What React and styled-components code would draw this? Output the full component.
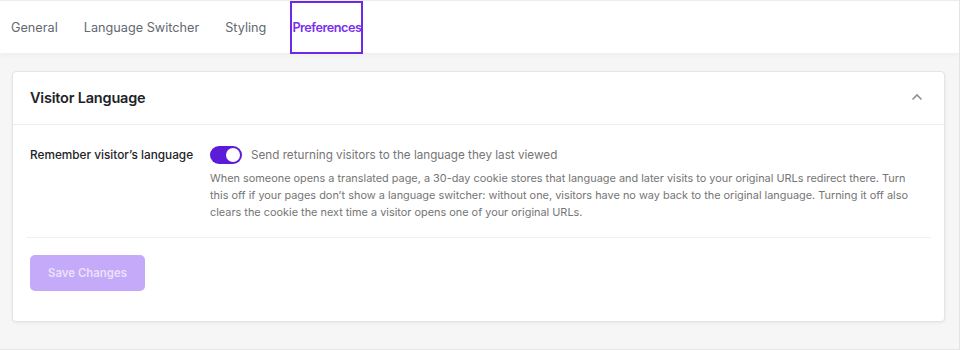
import { createGlobalStyle, styled } from "styled-components";

const Global = createGlobalStyle`
  html, body {
    margin: 0;
    padding: 0;
    background: #f6f6f7;
  }
  body {
    font-family: Inter, "Noto Sans", "Liberation Sans", sans-serif;
    -webkit-font-smoothing: antialiased;
  }
`

const Frame = styled.div`
  box-sizing: border-box;
  width: 960px;
  height: 350px;
  background: #f6f6f7;
  border-right: 1px solid #e4e4e6;
  border-bottom: 1px solid #e4e4e6;
  overflow: hidden;
`
const Nav = styled.div`
  box-sizing: border-box;
  height: 53px;
  background: #ffffff;
  border-top: 1px solid #ececec;
  display: flex;
  align-items: stretch;
  gap: 22px;
  padding-left: 9px;
  box-shadow: 0 2px 6px rgba(0, 0, 0, 0.04);
`
const Tab = styled.div`
  box-sizing: border-box;
  display: flex;
  align-items: center;
  font-size: 12.7px;
  font-weight: ${props => props.active ? 600 : 400};
  letter-spacing: ${props => props.active ? '-0.5px' : '0'};
  color: ${props => props.active ? '#7a2ff0' : '#646970'};
  border: ${props => props.active ? '2px solid #6a2be6' : '2px solid transparent'};
  margin-bottom: -1px;
  padding: 0;
`
const Content = styled.div`
  padding: 18px 14px 0 12px;
`
const Card = styled.div`
  box-sizing: border-box;
  height: 251px;
  background: #ffffff;
  border: 1px solid #e3e4e7;
  border-radius: 4px;
  box-shadow: 0 1px 3px rgba(0, 0, 0, 0.06);
`
const CardHeader = styled.div`
  box-sizing: border-box;
  height: 53px;
  padding: 0 21px 2px 17px;
  border-bottom: 1px solid #ececee;
  display: flex;
  align-items: center;
  justify-content: space-between;
`
const Title = styled.div`
  font-size: 14.5px;
  font-weight: 600;
  color: #1d2327;
  letter-spacing: -0.2px;
`
const CardBody = styled.div`
  padding: 0 13px;
`
const Row = styled.div`
  display: grid;
  grid-template-columns: 180px 1fr;
  padding: 21px 4px 16px;
  border-bottom: 1px solid #f0f0f1;
`
const Label = styled.div`
  font-size: 11.8px;
  font-weight: 500;
  color: #1d2327;
  line-height: 18px;
`
const ToggleLine = styled.div`
  display: flex;
  align-items: center;
  gap: 9px;
  height: 18px;
`
const Toggle = styled.div`
  position: relative;
  width: 32px;
  height: 18px;
  border-radius: 9px;
  background: ${props => props.on ? '#5b1bd8' : '#c3c4c7'};
  flex-shrink: 0;
  &::after {
    content: "";
    position: absolute;
    top: 2px;
    left: ${props => props.on ? '16px' : '2px'};
    width: 14px;
    height: 14px;
    border-radius: 50%;
    background: #ffffff;
  }
`
const ToggleText = styled.div`
  font-size: 11.7px;
  color: #757575;
`
const Desc = styled.div`
  margin-top: 6px;
  max-width: 706px;
  font-size: 10.9px;
  line-height: 17px;
  color: #757575;
`
const Footer = styled.div`
  padding: 17px 4px;
`
const SaveButton = styled.button`
  box-sizing: border-box;
  width: 115px;
  height: 36px;
  border: none;
  border-radius: 5px;
  background: #c4aaf8;
  color: #ebe1fd;
  font-family: inherit;
  font-size: 11.4px;
  font-weight: 600;
  cursor: not-allowed;
`

function Chevron() {
    return (
        <svg width="12" height="8" viewBox="0 0 12 8">
            <polyline points="1.5,6.5 6,2 10.5,6.5" fill="none" stroke="#8c8f94" strokeWidth="1.6" />
        </svg>
    )
}

function App() {
    const tabs = ["General", "Language Switcher", "Styling", "Preferences"];
    return (
        <Frame>
            <Global />
            <Nav>
                {tabs.map(t => (
                    <Tab key={t} active={t === "Preferences"}>{t}</Tab>
                ))}
            </Nav>
            <Content>
                <Card>
                    <CardHeader>
                        <Title>Visitor Language</Title>
                        <Chevron />
                    </CardHeader>
                    <CardBody>
                        <Row>
                            <Label>Remember visitor’s language</Label>
                            <div>
                                <ToggleLine>
                                    <Toggle on />
                                    <ToggleText>Send returning visitors to the language they last viewed</ToggleText>
                                </ToggleLine>
                                <Desc>
                                    When someone opens a translated page, a 30-day cookie stores that language and later visits to your original URLs redirect there. Turn this off if your pages don’t show a language switcher: without one, visitors have no way back to the original language. Turning it off also clears the cookie the next time a visitor opens one of your original URLs.
                                </Desc>
                            </div>
                        </Row>
                        <Footer>
                            <SaveButton disabled>Save Changes</SaveButton>
                        </Footer>
                    </CardBody>
                </Card>
            </Content>
        </Frame>
    )
}
export default App;
